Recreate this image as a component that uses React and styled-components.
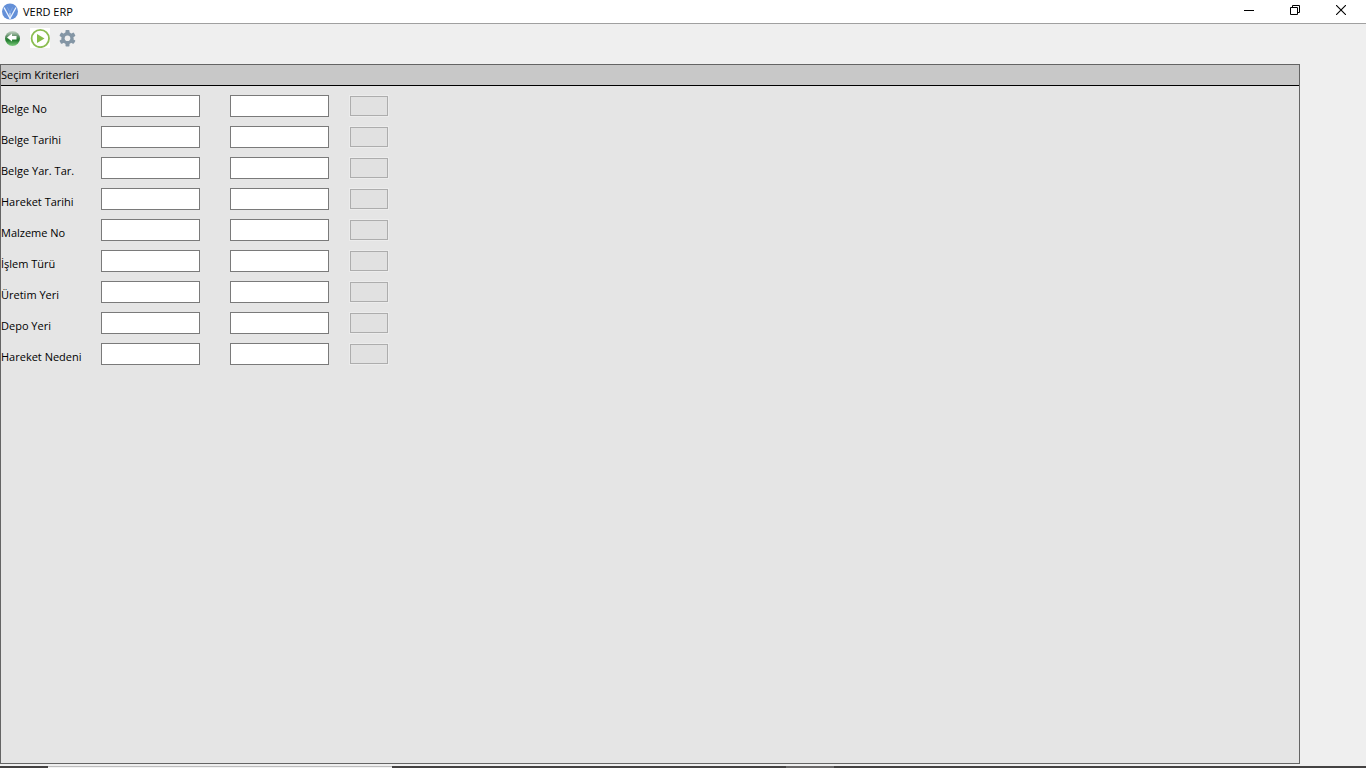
import React from 'react'
import styled, { createGlobalStyle } from 'styled-components'

const GlobalStyle = createGlobalStyle`
  * {
    box-sizing: border-box;
  }

  body {
    margin: 0;
    background: #efefef;
    color: #000;
    font-family: 'Open Sans', 'Noto Sans', sans-serif;
    font-size: 11px;
    line-height: 16px;
  }
`

const Window = styled.div`
  display: flex;
  flex-direction: column;
  min-height: 100vh;
`

const TitleBar = styled.header`
  display: flex;
  align-items: center;
  height: 24px;
  padding: 0 2px;
  background: #fff;
  border-bottom: 1px solid #a0a0a0;
`

const Title = styled.h1`
  flex: 1;
  margin: 0 0 0 5px;
  font-size: 11px;
  font-weight: 400;
`

const WindowButton = styled.button`
  display: flex;
  align-items: center;
  align-self: flex-start;
  justify-content: center;
  width: 46px;
  height: 20px;
  padding: 0;
  border: 0;
  background: transparent;
`

const Toolbar = styled.nav`
  display: flex;
  align-items: center;
  gap: 8px;
  height: 40px;
  padding: 0 2px 12px;
`

const ToolButton = styled.button`
  display: flex;
  align-items: center;
  justify-content: center;
  width: 20px;
  height: 20px;
  padding: 0;
  border: 0;
  background: ${({ $light }) => ($light ? '#fff' : 'transparent')};
`

const Panel = styled.main`
  flex: 1;
  margin: 0 66px 2px 0;
  border: 1px solid #646464;
  background: #e5e5e5;
`

const PanelTitle = styled.h2`
  height: 21px;
  margin: 0;
  padding-top: 2px;
  border-bottom: 1px solid #000;
  background: #c8c8c8;
  font-size: 11px;
  font-weight: 400;
`

const Criteria = styled.form`
  display: flex;
  flex-direction: column;
  gap: 9px;
  padding-top: 9px;
`

const Row = styled.div`
  display: flex;
  align-items: center;
  height: 22px;
`

const Label = styled.label`
  width: 100px;
  padding-top: 6px;
`

const Field = styled.input`
  width: 99px;
  height: 22px;
  margin-right: ${({ $last }) => ($last ? '21px' : '30px')};
  padding: 0 4px;
  border: 1px solid #7a7a7a;
  border-radius: 0;
  background: #fff;
  font: inherit;
  outline: 0;
`

const RangeButton = styled.button`
  width: 38px;
  height: 20px;
  padding: 0;
  border: 1px solid #adadad;
  background: #e1e1e1;
  box-shadow: 0 0 0 1px #ececec;
`

const Taskbar = styled.footer`
  display: flex;
  height: 2px;
  background: #444242;
`

const TaskbarItem = styled.div`
  width: ${({ $width }) => $width}px;
  margin-left: ${({ $offset }) => $offset}px;
  border-top: 1px solid ${({ $edge }) => $edge};
  background: ${({ $color }) => $color};
`

const LogoIcon = () => (
  <svg width="16" height="18" viewBox="0 0 16 18" aria-hidden="true">
    <ellipse cx="8" cy="8.5" rx="8" ry="8" fill="#6490d8" />
    <path d="M2 4.5 8 15.5 14 4.5" fill="none" stroke="#edf4ff" strokeWidth="1.3" />
    <path d="M5.5 4.5 8 10 10.5 4.5" fill="none" stroke="#86abe4" strokeWidth="0.8" />
    <path d="M8 10v6" stroke="#edf4ff" strokeWidth="1" />
  </svg>
)

const BackIcon = () => (
  <svg width="16" height="16" viewBox="0 0 16 16" aria-hidden="true">
    <defs>
      <linearGradient id="ball" x1="0" y1="0" x2="0" y2="1">
        <stop offset="0" stopColor="#c9d6ca" />
        <stop offset="0.35" stopColor="#63926a" />
        <stop offset="0.6" stopColor="#207a2c" />
        <stop offset="1" stopColor="#7fce80" />
      </linearGradient>
    </defs>
    <circle cx="8.5" cy="8.5" r="7.5" fill="url(#ball)" />
    <path d="M3 7.5 8 3.5V6H12.5V9.5H8V11.5Z" fill="#fff" />
  </svg>
)

const RunIcon = () => (
  <svg width="20" height="20" viewBox="0 0 20 20" aria-hidden="true">
    <circle cx="10.3" cy="10.5" r="8.7" fill="#fff" stroke="#8bbd52" strokeWidth="1.8" />
    <path d="M7 6 14.5 10.5 7 15Z" fill="#85bd48" />
  </svg>
)

const GearIcon = () => (
  <svg width="18" height="18" viewBox="0 0 18 18" aria-hidden="true">
    <g fill="#8496a5">
      {[0, 60, 120].map((angle) => (
        <rect key={angle} x="6.5" y="1" width="4" height="16.5" rx="0.8" transform={`rotate(${angle} 8.5 9.2)`} />
      ))}
      <circle cx="8.5" cy="9.2" r="6.1" />
    </g>
    <circle cx="8.5" cy="9.2" r="2.8" fill="#efefef" />
  </svg>
)

const MinimizeIcon = () => (
  <svg width="10" height="10" viewBox="0 0 10 10" aria-hidden="true">
    <path d="M0 5.5H10" stroke="#000" />
  </svg>
)

const RestoreIcon = () => (
  <svg width="10" height="10" viewBox="0 0 10 10" fill="none" stroke="#000" aria-hidden="true">
    <path d="M0.5 2.5H7.5V9.5H0.5ZM2.5 2.5V0.5H9.5V7.5H7.5" />
  </svg>
)

const CloseIcon = () => (
  <svg width="10" height="10" viewBox="0 0 10 10" aria-hidden="true">
    <path d="M0 0 10 10M10 0 0 10" stroke="#000" strokeWidth="1.1" />
  </svg>
)

const criteria = [
  { id: 'belgeNo', label: 'Belge No' },
  { id: 'belgeTarihi', label: 'Belge Tarihi' },
  { id: 'belgeYarTar', label: 'Belge Yar. Tar.' },
  { id: 'hareketTarihi', label: 'Hareket Tarihi' },
  { id: 'malzemeNo', label: 'Malzeme No' },
  { id: 'islemTuru', label: 'İşlem Türü' },
  { id: 'uretimYeri', label: 'Üretim Yeri' },
  { id: 'depoYeri', label: 'Depo Yeri' },
  { id: 'hareketNedeni', label: 'Hareket Nedeni' },
]

const App = () => {
  return (
    <Window lang="tr">
      <GlobalStyle />
      <TitleBar>
        <LogoIcon />
        <Title>VERD ERP</Title>
        <WindowButton aria-label="Simge durumuna küçült"><MinimizeIcon /></WindowButton>
        <WindowButton aria-label="Önceki boyut"><RestoreIcon /></WindowButton>
        <WindowButton aria-label="Kapat"><CloseIcon /></WindowButton>
      </TitleBar>
      <Toolbar>
        <ToolButton aria-label="Geri"><BackIcon /></ToolButton>
        <ToolButton $light aria-label="Çalıştır"><RunIcon /></ToolButton>
        <ToolButton aria-label="Ayarlar"><GearIcon /></ToolButton>
      </Toolbar>
      <Panel>
        <PanelTitle>Seçim Kriterleri</PanelTitle>
        <Criteria>
          {criteria.map(({ id, label }) => (
            <Row key={id}>
              <Label htmlFor={id}>{label}</Label>
              <Field id={id} type="text" />
              <Field id={`${id}Son`} type="text" aria-label={`${label} bitiş`} $last />
              <RangeButton type="button" disabled aria-label={`${label} çoklu seçim`} />
            </Row>
          ))}
        </Criteria>
      </Panel>
      <Taskbar>
        <TaskbarItem $offset={48} $width={344} $edge="#bdbdbd" $color="#f2f2f2" />
        <TaskbarItem $offset={394} $width={48} $edge="#6b6969" $color="#6b6969" />
      </Taskbar>
    </Window>
  )
}

export default App
